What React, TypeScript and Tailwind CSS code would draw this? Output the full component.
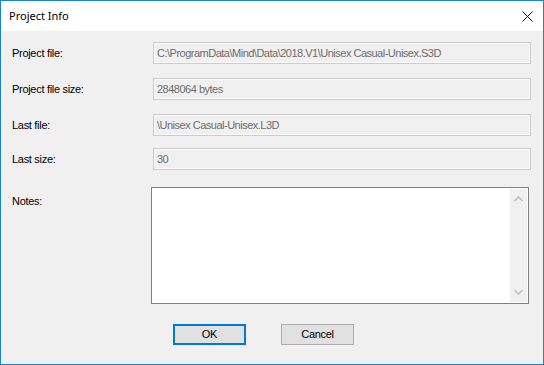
import type { FC } from 'react';

type FieldRowProps = {
	label: string;
	value: string;
	className?: string;
};

const FieldRow: FC<FieldRowProps> = ({ label, value, className }) => {
	return (
		<div className={`flex items-center h-[22px] ${className ?? ''}`}>
			<div className="w-[152px] pl-[11px] text-black tracking-[-0.3px]">{label}</div>
			<div className="w-[378px] h-[22px] border border-[#cccccc] shadow-[inset_0_0_0_1px_#fafafa] flex items-center pl-[3px] text-[#6d6d6d] whitespace-nowrap overflow-hidden tracking-[-0.5px]">
				{value}
			</div>
		</div>
	);
};

const Chevron: FC<{ down?: boolean }> = ({ down }) => (
	<svg width="9" height="6" viewBox="0 0 9 6" className={down ? 'rotate-180' : ''}>
		<path d="M0.5 5 L4.5 1 L8.5 5" fill="none" stroke="#c2c2c2" strokeWidth="1.6" />
	</svg>
);

export default function App() {
	return (
		<div
			className="w-[544px] h-[365px] border border-[#1883d7] bg-[#f0f0f0] flex flex-col text-[11px]"
			style={{ fontFamily: '"Liberation Sans", Arial, sans-serif' }}
		>
			<div className="h-[30px] bg-white flex items-center justify-between shrink-0">
				<span className="pl-[8px] text-[11px] text-black" style={{ fontFamily: '"Noto Sans", "Open Sans", sans-serif' }}>
					Project Info
				</span>
				<svg width="11" height="11" viewBox="0 0 11 11" className="mr-[10px]">
					<path d="M0.5 0.5 L10.5 10.5 M10.5 0.5 L0.5 10.5" stroke="#111" strokeWidth="1" />
				</svg>
			</div>

			<div className="flex flex-col pt-[11px]">
				<FieldRow label="Project file:" value="C:\ProgramData\Mind\Data\2018.V1\Unisex Casual-Unisex.S3D" />
				<FieldRow className="mt-[14px]" label="Project file size:" value="2848064 bytes" />
				<FieldRow className="mt-[14px]" label="Last file:" value="\Unisex Casual-Unisex.L3D" />
				<FieldRow className="mt-[12px]" label="Last size:" value="30" />

				<div className="flex mt-[17px]">
					<div className="w-[150px] pl-[11px] pt-[6px] text-black tracking-[-0.3px]">Notes:</div>
					<div className="w-[378px] h-[117px] border border-[#828282] bg-white flex justify-end p-px">
						<div className="w-[17px] bg-[#f0f0f0] flex flex-col items-center justify-between py-[7px]">
							<Chevron />
							<Chevron down />
						</div>
					</div>
				</div>

				<div className="flex mt-[20px] pl-[172px] gap-[35px]">
					<button className="w-[73px] h-[21px] border-2 border-[#0078d7] bg-[#e1e1e1] text-black leading-none tracking-[-0.3px]">
						OK
					</button>
					<button className="w-[73px] h-[21px] border border-[#adadad] bg-[#e1e1e1] text-black leading-none tracking-[-0.3px]">
						Cancel
					</button>
				</div>
			</div>
		</div>
	);
}
